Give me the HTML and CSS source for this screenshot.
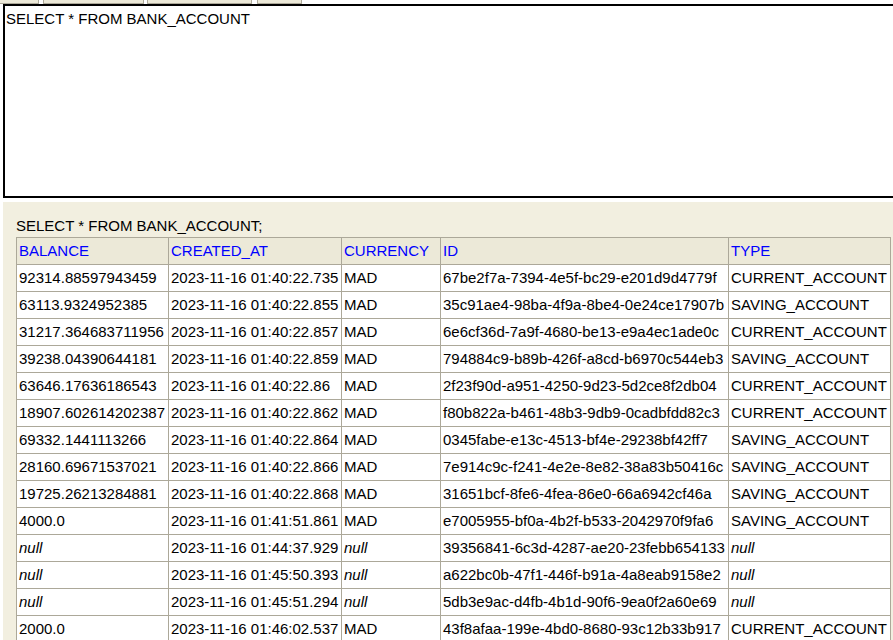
FILE: index.html
```html
<!DOCTYPE html>
<html>
<head>
<meta charset="utf-8">
<title>H2 Console</title>
<link rel="stylesheet" href="styles.css">
</head>
<body>
<div class="toolbar">
  <span class="tbtn w1"></span>
  <span class="tbtn w2"></span>
  <span class="tbtn w3"></span>
  <span class="tbtn w4"></span>
</div>
<div class="editor">SELECT * FROM BANK_ACCOUNT</div>
<div class="result">
  <div class="query">SELECT * FROM BANK_ACCOUNT;</div>
  <table class="rs">
    <thead>
      <tr>
        <th class="c1"><a>BALANCE</a></th>
        <th class="c2"><a>CREATED_AT</a></th>
        <th class="c3"><a>CURRENCY</a></th>
        <th class="c4"><a>ID</a></th>
        <th class="c5"><a>TYPE</a></th>
      </tr>
    </thead>
    <tbody>
      <tr><td>92314.88597943459</td><td>2023-11-16 01:40:22.735</td><td>MAD</td><td>67be2f7a-7394-4e5f-bc29-e201d9d4779f</td><td>CURRENT_ACCOUNT</td></tr>
      <tr><td>63113.9324952385</td><td>2023-11-16 01:40:22.855</td><td>MAD</td><td>35c91ae4-98ba-4f9a-8be4-0e24ce17907b</td><td>SAVING_ACCOUNT</td></tr>
      <tr><td>31217.364683711956</td><td>2023-11-16 01:40:22.857</td><td>MAD</td><td>6e6cf36d-7a9f-4680-be13-e9a4ec1ade0c</td><td>CURRENT_ACCOUNT</td></tr>
      <tr><td>39238.04390644181</td><td>2023-11-16 01:40:22.859</td><td>MAD</td><td>794884c9-b89b-426f-a8cd-b6970c544eb3</td><td>SAVING_ACCOUNT</td></tr>
      <tr><td>63646.17636186543</td><td>2023-11-16 01:40:22.86</td><td>MAD</td><td>2f23f90d-a951-4250-9d23-5d2ce8f2db04</td><td>CURRENT_ACCOUNT</td></tr>
      <tr><td>18907.602614202387</td><td>2023-11-16 01:40:22.862</td><td>MAD</td><td>f80b822a-b461-48b3-9db9-0cadbfdd82c3</td><td>CURRENT_ACCOUNT</td></tr>
      <tr><td>69332.1441113266</td><td>2023-11-16 01:40:22.864</td><td>MAD</td><td>0345fabe-e13c-4513-bf4e-29238bf42ff7</td><td>SAVING_ACCOUNT</td></tr>
      <tr><td>28160.69671537021</td><td>2023-11-16 01:40:22.866</td><td>MAD</td><td>7e914c9c-f241-4e2e-8e82-38a83b50416c</td><td>SAVING_ACCOUNT</td></tr>
      <tr><td>19725.26213284881</td><td>2023-11-16 01:40:22.868</td><td>MAD</td><td>31651bcf-8fe6-4fea-86e0-66a6942cf46a</td><td>SAVING_ACCOUNT</td></tr>
      <tr><td>4000.0</td><td>2023-11-16 01:41:51.861</td><td>MAD</td><td>e7005955-bf0a-4b2f-b533-2042970f9fa6</td><td>SAVING_ACCOUNT</td></tr>
      <tr><td><i>null</i></td><td>2023-11-16 01:44:37.929</td><td><i>null</i></td><td>39356841-6c3d-4287-ae20-23febb654133</td><td><i>null</i></td></tr>
      <tr><td><i>null</i></td><td>2023-11-16 01:45:50.393</td><td><i>null</i></td><td>a622bc0b-47f1-446f-b91a-4a8eab9158e2</td><td><i>null</i></td></tr>
      <tr><td><i>null</i></td><td>2023-11-16 01:45:51.294</td><td><i>null</i></td><td>5db3e9ac-d4fb-4b1d-90f6-9ea0f2a60e69</td><td><i>null</i></td></tr>
      <tr><td>2000.0</td><td>2023-11-16 01:46:02.537</td><td>MAD</td><td>43f8afaa-199e-4bd0-8680-93c12b33b917</td><td>CURRENT_ACCOUNT</td></tr>
    </tbody>
  </table>
</div>
</body>
</html>
```
FILE: styles.css
```css
html, body {
  margin: 0;
  padding: 0;
  background: #fff;
  overflow: hidden;
}
body {
  height: 640px;
  display: flex;
  flex-direction: column;
  font-family: "Liberation Sans", Arial, sans-serif;
  font-size: 15px;
  color: #000;
}
.toolbar {
  height: 4px;
  flex: none;
  overflow: hidden;
  display: flex;
  align-items: flex-end;
}
.tbtn {
  display: block;
  height: 20px;
  background: #ece9d8;
  border: 1px solid #aca899;
  box-sizing: border-box;
  flex: none;
}
.w1 { width: 40px; margin-left: -1px; }
.w2 { width: 101px; margin-left: 4px; }
.w3 { width: 105px; margin-left: 3px; }
.w4 { width: 45px; margin-left: 5px; }
.editor {
  flex: none;
  margin-left: 3px;
  height: 194px;
  border: 2px solid #000;
  border-right: none;
  background: #fff;
  padding: 4px 1px;
  box-sizing: border-box;
  line-height: 17px;
  white-space: pre;
}
.result {
  flex: 1;
  min-height: 0;
  overflow: hidden;
  margin-top: 4px;
  margin-left: 3px;
  background: #f2efe0;
  padding: 15px 0 0 13px;
}
.query {
  line-height: 17px;
  margin-bottom: 3px;
}
.rs {
  border-collapse: collapse;
  table-layout: fixed;
  width: 875px;
}
.rs th, .rs td {
  border: 1px solid #aca899;
  padding: 4px 2px;
  line-height: 18px;
  text-align: left;
  font-weight: normal;
  white-space: nowrap;
  overflow: hidden;
  vertical-align: top;
}
.rs th {
  background: #ece9d8;
}
.rs th a {
  color: #0000ff;
  text-decoration: none;
}
.rs td {
  background: #fff;
}
.c1 { width: 147px; }
.c2 { width: 168px; }
.c3 { width: 94px; }
.c4 { width: 283px; }
.c5 { width: 157px; }
```
